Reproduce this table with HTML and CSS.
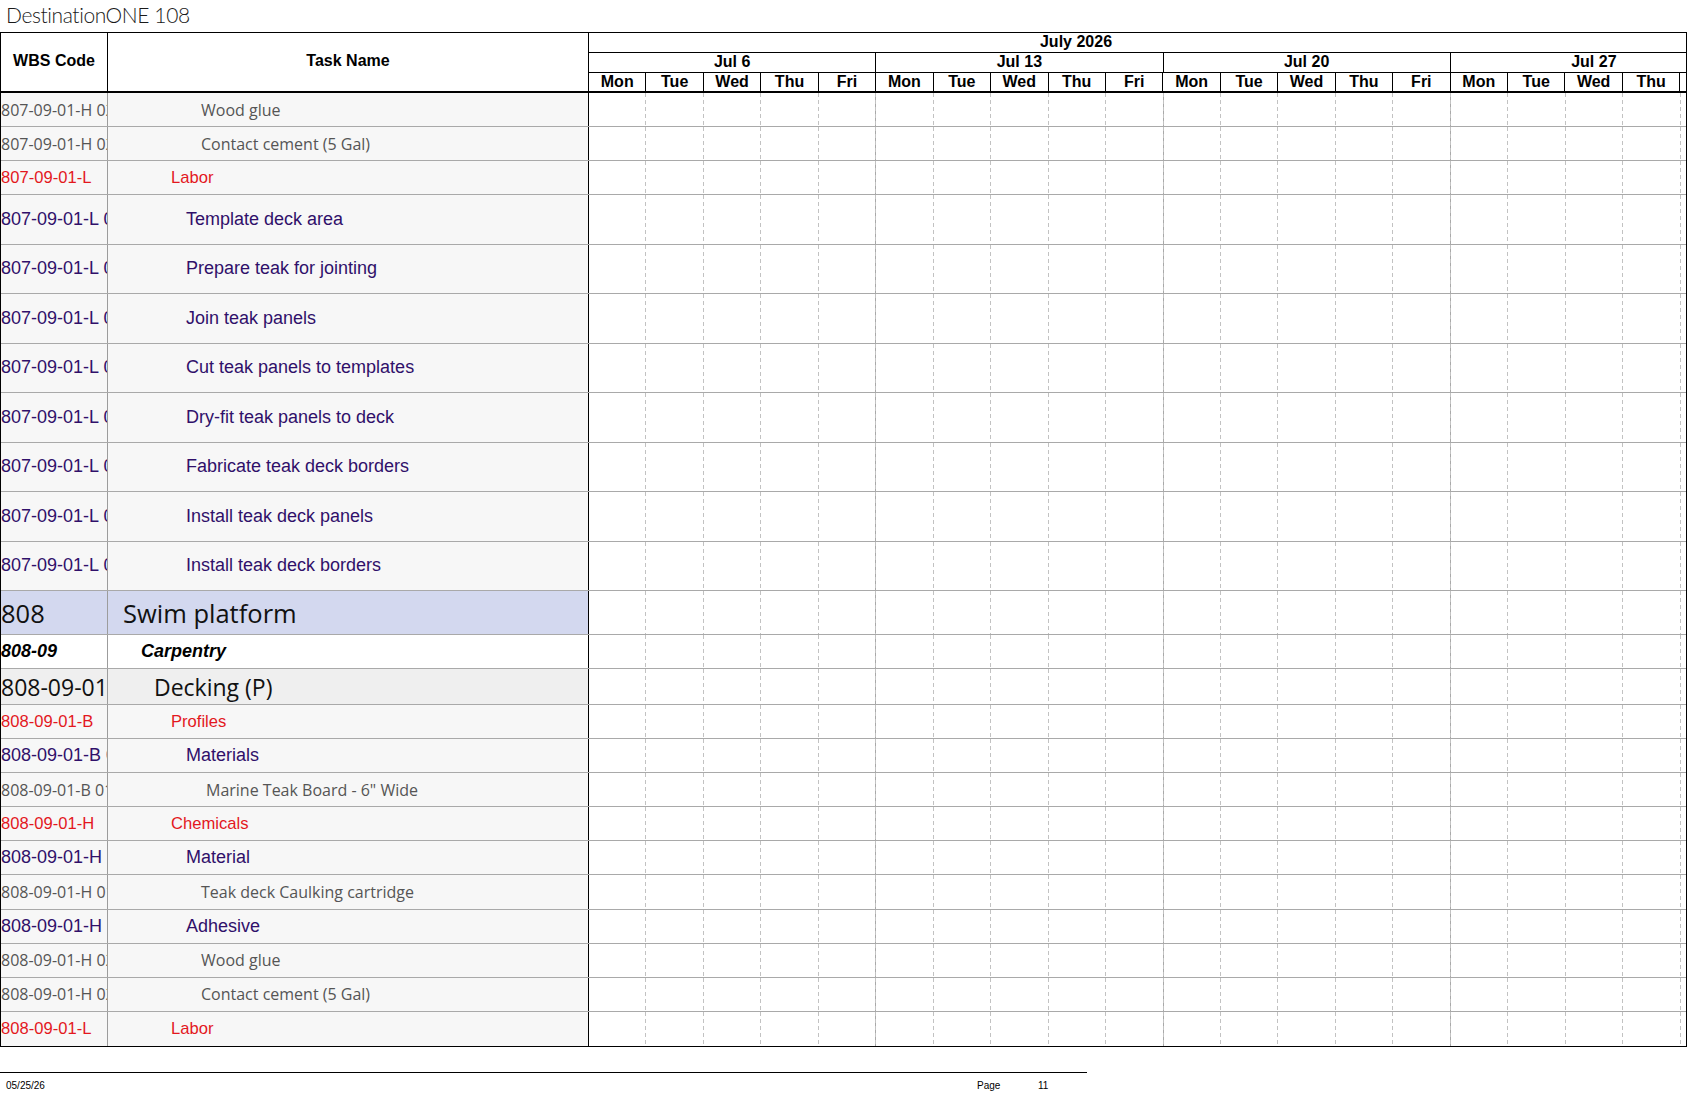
FILE: index.html
```html
<!DOCTYPE html>
<html>
<head>
<meta charset="utf-8">
<link rel="stylesheet" href="styles.css">
</head>
<body>
<div class="title">DestinationONE 108</div>
<div class="sheet">
  <div class="hdr">
    <div class="hc hwbs">WBS Code</div>
    <div class="hc htask">Task Name</div>
    <div class="tl">
      <div class="month"><span class="mlabel">July 2026</span></div>
      <div class="weeks">
        <div class="wk">Jul 6</div><div class="wk">Jul 13</div><div class="wk">Jul 20</div><div class="wk">Jul 27</div>
      </div>
      <div class="days">
        <div class="d">Mon</div><div class="d">Tue</div><div class="d">Wed</div><div class="d">Thu</div><div class="d">Fri</div>
        <div class="d">Mon</div><div class="d">Tue</div><div class="d">Wed</div><div class="d">Thu</div><div class="d">Fri</div>
        <div class="d">Mon</div><div class="d">Tue</div><div class="d">Wed</div><div class="d">Thu</div><div class="d">Fri</div>
        <div class="d">Mon</div><div class="d">Tue</div><div class="d">Wed</div><div class="d">Thu</div><div class="d">Fri</div>
      </div>
    </div>
  </div>

  <div class="row r34"><div class="c wbs gray">807-09-01-H 02</div><div class="c task gray i94">Wood glue</div><div class="gantt"></div></div>
  <div class="row r34"><div class="c wbs gray">807-09-01-H 02</div><div class="c task gray i94">Contact cement (5 Gal)</div><div class="gantt"></div></div>
  <div class="row r34"><div class="c wbs red">807-09-01-L</div><div class="c task red i63">Labor</div><div class="gantt"></div></div>
  <div class="row r50"><div class="c wbs purple">807-09-01-L 01</div><div class="c task purple i78">Template deck area</div><div class="gantt"></div></div>
  <div class="row r50"><div class="c wbs purple">807-09-01-L 02</div><div class="c task purple i78">Prepare teak for jointing</div><div class="gantt"></div></div>
  <div class="row r50"><div class="c wbs purple">807-09-01-L 03</div><div class="c task purple i78">Join teak panels</div><div class="gantt"></div></div>
  <div class="row r50"><div class="c wbs purple">807-09-01-L 04</div><div class="c task purple i78">Cut teak panels to templates</div><div class="gantt"></div></div>
  <div class="row r50"><div class="c wbs purple">807-09-01-L 05</div><div class="c task purple i78">Dry-fit teak panels to deck</div><div class="gantt"></div></div>
  <div class="row r50"><div class="c wbs purple">807-09-01-L 06</div><div class="c task purple i78">Fabricate teak deck borders</div><div class="gantt"></div></div>
  <div class="row r50"><div class="c wbs purple">807-09-01-L 07</div><div class="c task purple i78">Install teak deck panels</div><div class="gantt"></div></div>
  <div class="row r50"><div class="c wbs purple">807-09-01-L 08</div><div class="c task purple i78">Install teak deck borders</div><div class="gantt"></div></div>
  <div class="row r44 lav"><div class="c wbs big">808</div><div class="c task big i16">Swim platform</div><div class="gantt"></div></div>
  <div class="row r34 wht"><div class="c wbs bi">808-09</div><div class="c task bi i33">Carpentry</div><div class="gantt"></div></div>
  <div class="row r36 lt"><div class="c wbs mid">808-09-01</div><div class="c task mid i47">Decking (P)</div><div class="gantt"></div></div>
  <div class="row r34b"><div class="c wbs red">808-09-01-B</div><div class="c task red i63">Profiles</div><div class="gantt"></div></div>
  <div class="row r34b"><div class="c wbs purple">808-09-01-B 01</div><div class="c task purple i78">Materials</div><div class="gantt"></div></div>
  <div class="row r34b"><div class="c wbs gray">808-09-01-B 01</div><div class="c task gray i98">Marine Teak Board - 6" Wide</div><div class="gantt"></div></div>
  <div class="row r34b"><div class="c wbs red">808-09-01-H</div><div class="c task red i63">Chemicals</div><div class="gantt"></div></div>
  <div class="row r34b"><div class="c wbs purple">808-09-01-H 01</div><div class="c task purple i78">Material</div><div class="gantt"></div></div>
  <div class="row r34b"><div class="c wbs gray">808-09-01-H 01</div><div class="c task gray i94">Teak deck Caulking cartridge</div><div class="gantt"></div></div>
  <div class="row r34b"><div class="c wbs purple">808-09-01-H 02</div><div class="c task purple i78">Adhesive</div><div class="gantt"></div></div>
  <div class="row r34b"><div class="c wbs gray">808-09-01-H 02</div><div class="c task gray i94">Wood glue</div><div class="gantt"></div></div>
  <div class="row r34b"><div class="c wbs gray">808-09-01-H 02</div><div class="c task gray i94">Contact cement (5 Gal)</div><div class="gantt"></div></div>
  <div class="row r34b last"><div class="c wbs red">808-09-01-L</div><div class="c task red i63">Labor</div><div class="gantt"></div></div>
</div>
<div class="footer">
  <div class="fline"></div>
  <div class="ftext">
    <span class="fdate">05/25/26</span>
    <span class="fpage">Page</span>
    <span class="fnum">11</span>
  </div>
</div>
</body>
</html>
```

FILE: styles.css
```css
* { box-sizing: border-box; }
html, body { margin: 0; padding: 0; background: #fff; }
body { width: 1687px; font-family: "Liberation Sans", Arial, sans-serif; color: #000; }

.title {
  height: 32px;
  padding-left: 6px;
  font-family: Lato, "Liberation Sans", sans-serif;
  font-weight: 300;
  font-size: 21px;
  line-height: 29px;
  color: #1a1a1a;
  letter-spacing: -0.4px;
}

.sheet {
  width: 1687px;
  border: 1px solid #000;
  overflow: hidden;
}

.hdr {
  display: grid;
  grid-template-columns: 107px 481px 1097px;
  height: 60px;
}
.hc {
  display: flex;
  align-items: center;
  justify-content: center;
  font-weight: bold;
  font-size: 16px;
  border-bottom: 2px solid #000;
  border-right: 1px solid #000;
  padding-bottom: 2px;
}
.tl { overflow: hidden; display: flex; flex-direction: column; }
.month {
  height: 20px;
  border-bottom: 1px solid #000;
  font-weight: bold;
  font-size: 16px;
  line-height: 17px;
}
.mlabel { display: block; width: 974px; text-align: center; }
.weeks, .days { display: flex; }
.weeks { height: 20px; border-bottom: 1px solid #000; }
.wk {
  flex: 0 0 287.25px;
  border-right: 1px solid #000;
  text-align: center;
  font-weight: bold;
  font-size: 16px;
  line-height: 17px;
}
.days { height: 20px; border-bottom: 2px solid #000; }
.d {
  flex: 0 0 57.45px;
  border-right: 1px solid #000;
  text-align: center;
  font-weight: bold;
  font-size: 16px;
  line-height: 18px;
}

.row {
  display: grid;
  grid-template-columns: 107px 481px 1097px;
  border-bottom: 1px solid #a9a9a9;
}
.row.last { border-bottom: 0; }
.r34 { height: 34px; }
.r34b { height: 34.1px; }
.r50 { height: 49.5px; }
.r44 { height: 44px; }
.r36 { height: 36px; }

.c {
  display: flex;
  align-items: center;
  white-space: nowrap;
  overflow: hidden;
  background: #f7f7f7;
}
.wbs { border-right: 1px solid #9c9c9c; padding-left: 0; }
.task { border-right: 1px solid #000; }

.lav .c { background: #d3d8ef; }
.wht .c { background: #fff; }
.lt .c { background: #efefef; }

.gantt {
  position: relative;
  background: repeating-linear-gradient(to right, transparent 0 286.25px, #a9a9a9 286.25px 287.25px);
}
.gantt::before {
  content: "";
  position: absolute;
  inset: 0;
  background: repeating-linear-gradient(to right, transparent 0 56.45px, #c2c2c2 56.45px 57.45px);
  -webkit-mask-image: repeating-linear-gradient(to bottom, #000 0 4px, transparent 4px 7px);
  mask-image: repeating-linear-gradient(to bottom, #000 0 4px, transparent 4px 7px);
}

.gray { font-family: "Open Sans", sans-serif; font-size: 16px; color: #555; }
.red { font-family: "Liberation Sans", Arial, sans-serif; font-size: 16.6px; color: #e3171e; }
.purple { font-family: "Liberation Sans", Arial, sans-serif; font-size: 18px; color: #30106a; }
.big { font-family: "Open Sans", sans-serif; font-size: 25.5px; color: #111; }
.bi { font-family: "Liberation Sans", Arial, sans-serif; font-size: 18px; font-weight: bold; font-style: italic; color: #000; }
.mid { font-family: "Open Sans", sans-serif; font-size: 23px; color: #111; }

.i16 { padding-left: 15px; }
.i33 { padding-left: 33px; }
.i47 { padding-left: 46px; }
.i63 { padding-left: 63px; }
.i78 { padding-left: 78px; }
.i94 { padding-left: 93px; }
.i98 { padding-left: 98px; }

.footer { margin-top: 25px; }
.fline { width: 1087px; height: 1px; background: #000; }
.ftext {
  height: 24px;
  font-size: 10px;
  line-height: 26px;
  display: flex;
}
.fdate { padding-left: 6px; width: 977px; }
.fpage { width: 61px; }
```
